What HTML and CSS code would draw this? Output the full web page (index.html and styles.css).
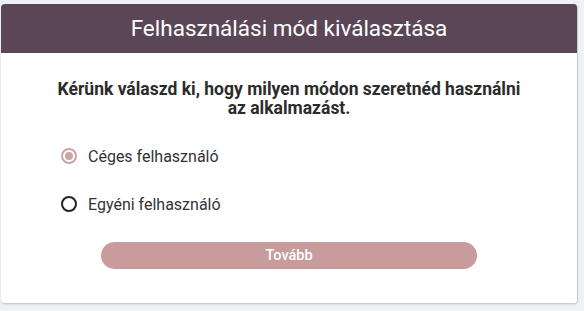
FILE: index.html
```html
<!DOCTYPE html>
<html lang="hu">
<head>
<meta charset="utf-8">
<link rel="stylesheet" href="styles.css">
</head>
<body>
<div class="card">
  <div class="card-header">Felhasználási mód kiválasztása</div>
  <div class="card-body">
    <p class="question">Kérünk válaszd ki, hogy milyen módon szeretnéd használni<br>az alkalmazást.</p>
    <div class="options">
      <label class="option">
        <span class="radio checked"></span>
        <span class="label">Céges felhasználó</span>
      </label>
      <label class="option">
        <span class="radio"></span>
        <span class="label">Egyéni felhasználó</span>
      </label>
    </div>
    <div class="actions">
      <button class="btn">Tovább</button>
    </div>
  </div>
</div>
</body>
</html>
```
FILE: styles.css
```css
html, body {
  margin: 0;
  padding: 0;
}
body {
  background: #eef2f5;
  font-family: Roboto, "Liberation Sans", sans-serif;
  width: 584px;
  height: 311px;
  overflow: hidden;
}
.card {
  margin: 4px 0 0 1px;
  width: 577px;
  height: 300px;
  box-sizing: border-box;
  background: #fff;
  border-radius: 4px;
  border-right: 1px solid #c9ccd0;
  border-bottom: 1px solid #c9ccd0;
  box-shadow: 0 1px 2px rgba(0,0,0,0.08);
  overflow: hidden;
}
.card-header {
  background: #5a4656;
  color: #fff;
  height: 49px;
  line-height: 48px;
  text-align: center;
  font-size: 22.5px;
  font-weight: 400;
}
.question {
  margin: 27px 0 0 0;
  text-align: center;
  font-weight: 700;
  font-size: 17.5px;
  line-height: 19px;
  color: #2b2b2b;
}
.options {
  display: flex;
  flex-direction: column;
  gap: 30px;
  margin: 29px 0 0 60px;
}
.option {
  display: flex;
  align-items: center;
  gap: 11px;
  height: 18px;
}
.radio {
  width: 16px;
  height: 16px;
  box-sizing: border-box;
  border-radius: 50%;
  border: 2px solid #222;
  display: flex;
  align-items: center;
  justify-content: center;
}
.radio.checked {
  border-color: #cba5a5;
}
.radio.checked::after {
  content: "";
  width: 8px;
  height: 8px;
  border-radius: 50%;
  background: #cba5a5;
}
.label {
  font-size: 16px;
  color: #333;
}
.actions {
  display: flex;
  margin: 29px 0 0 100px;
}
.btn {
  width: 376px;
  height: 27px;
  border: none;
  border-radius: 14px;
  background: #c89c9c;
  color: #fff;
  font-family: Roboto, "Liberation Sans", sans-serif;
  font-size: 14.5px;
  font-weight: 500;
  padding: 0;
}
```
